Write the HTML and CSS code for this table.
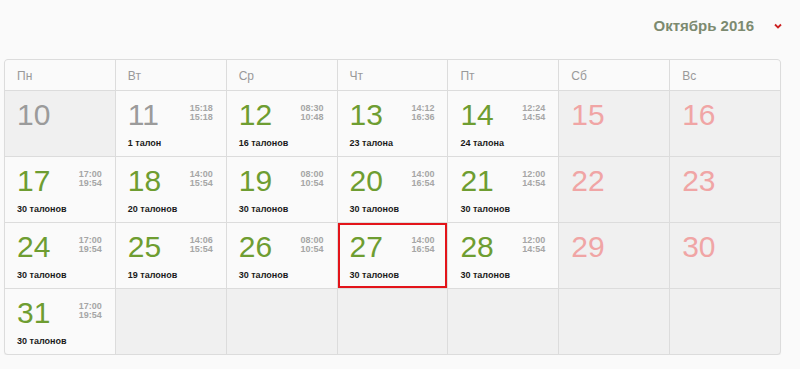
FILE: index.html
```html
<!DOCTYPE html>
<html lang="ru">
<head>
<meta charset="utf-8">
<title>Календарь</title>
<link rel="stylesheet" href="styles.css">
</head>
<body>
<div class="top">
  <span class="month">Октябрь 2016</span>
  <svg class="chev" width="8" height="6" viewBox="0 0 8 6"><path d="M1 1.5 L4 4.5 L7 1.5" fill="none" stroke="#cc2222" stroke-width="1.8"/></svg>
</div>
<div class="cal">
  <div class="wd">Пн</div><div class="wd">Вт</div><div class="wd">Ср</div><div class="wd">Чт</div><div class="wd">Пт</div><div class="wd">Сб</div><div class="wd">Вс</div>

  <div class="c off"><div class="head"><span class="n past">10</span></div></div>
  <div class="c"><div class="head"><span class="n past">11</span><span class="t">15:18<br>15:18</span></div><div class="cnt">1 талон</div></div>
  <div class="c"><div class="head"><span class="n">12</span><span class="t">08:30<br>10:48</span></div><div class="cnt">16 талонов</div></div>
  <div class="c"><div class="head"><span class="n">13</span><span class="t">14:12<br>16:36</span></div><div class="cnt">23 талона</div></div>
  <div class="c"><div class="head"><span class="n">14</span><span class="t">12:24<br>14:54</span></div><div class="cnt">24 талона</div></div>
  <div class="c off"><div class="head"><span class="n we">15</span></div></div>
  <div class="c off"><div class="head"><span class="n we">16</span></div></div>

  <div class="c"><div class="head"><span class="n">17</span><span class="t">17:00<br>19:54</span></div><div class="cnt">30 талонов</div></div>
  <div class="c"><div class="head"><span class="n">18</span><span class="t">14:00<br>15:54</span></div><div class="cnt">20 талонов</div></div>
  <div class="c"><div class="head"><span class="n">19</span><span class="t">08:00<br>10:54</span></div><div class="cnt">30 талонов</div></div>
  <div class="c"><div class="head"><span class="n">20</span><span class="t">14:00<br>16:54</span></div><div class="cnt">30 талонов</div></div>
  <div class="c"><div class="head"><span class="n">21</span><span class="t">12:00<br>14:54</span></div><div class="cnt">30 талонов</div></div>
  <div class="c off"><div class="head"><span class="n we">22</span></div></div>
  <div class="c off"><div class="head"><span class="n we">23</span></div></div>

  <div class="c"><div class="head"><span class="n">24</span><span class="t">17:00<br>19:54</span></div><div class="cnt">30 талонов</div></div>
  <div class="c"><div class="head"><span class="n">25</span><span class="t">14:06<br>15:54</span></div><div class="cnt">19 талонов</div></div>
  <div class="c"><div class="head"><span class="n">26</span><span class="t">08:00<br>10:54</span></div><div class="cnt">30 талонов</div></div>
  <div class="c sel"><div class="head"><span class="n">27</span><span class="t">14:00<br>16:54</span></div><div class="cnt">30 талонов</div></div>
  <div class="c"><div class="head"><span class="n">28</span><span class="t">12:00<br>14:54</span></div><div class="cnt">30 талонов</div></div>
  <div class="c off"><div class="head"><span class="n we">29</span></div></div>
  <div class="c off"><div class="head"><span class="n we">30</span></div></div>

  <div class="c"><div class="head"><span class="n">31</span><span class="t">17:00<br>19:54</span></div><div class="cnt">30 талонов</div></div>
  <div class="c off"></div><div class="c off"></div><div class="c off"></div><div class="c off"></div><div class="c off"></div><div class="c off"></div>
</div>
</body>
</html>
```
FILE: styles.css
```css
html, body {
  margin: 0;
  padding: 0;
  background: #fafafa;
  font-family: "Liberation Sans", Arial, sans-serif;
}
.top {
  height: 59px;
  display: flex;
  align-items: center;
  justify-content: flex-end;
  padding-right: 18px;
  box-sizing: border-box;
}
.month {
  font-size: 15px;
  font-weight: bold;
  color: #7c8a70;
  margin-right: 20px;
  margin-top: -9px;
}
.chev {
  margin-top: -7px;
}
.cal {
  margin-left: 4px;
  width: 777px;
  box-sizing: border-box;
  display: grid;
  grid-template-columns: repeat(7, 1fr);
  grid-template-rows: 30px repeat(4, 65px);
  gap: 1px;
  background: #dcdcdc;
  border: 1px solid #dcdcdc;
  border-radius: 4px;
  overflow: hidden;
  box-shadow: 0 1px 1px rgba(0,0,0,0.06);
}
.wd {
  background: #fafafa;
  color: #999;
  font-size: 12px;
  padding: 9px 12px 0;
}
.c {
  background: #fafafa;
  padding: 9px 12px 0 12px;
  box-sizing: border-box;
}
.c.off {
  background: #f0f0f0;
}
.c.sel {
  box-shadow: inset 0 0 0 2px #e3141a;
}
.head {
  display: flex;
  justify-content: space-between;
  align-items: flex-start;
}
.n {
  font-size: 30px;
  line-height: 30px;
  color: #6e9d31;
}
.n.past {
  color: #9b9b9b;
}
.n.we {
  color: #f0a5a5;
}
.t {
  font-size: 9px;
  line-height: 9px;
  font-weight: bold;
  color: #a6a6a6;
  text-align: right;
  padding-top: 4px;
  padding-right: 1px;
}
.cnt {
  margin-top: 8px;
  font-size: 9px;
  font-weight: bold;
  color: #1a1a1a;
}
```
